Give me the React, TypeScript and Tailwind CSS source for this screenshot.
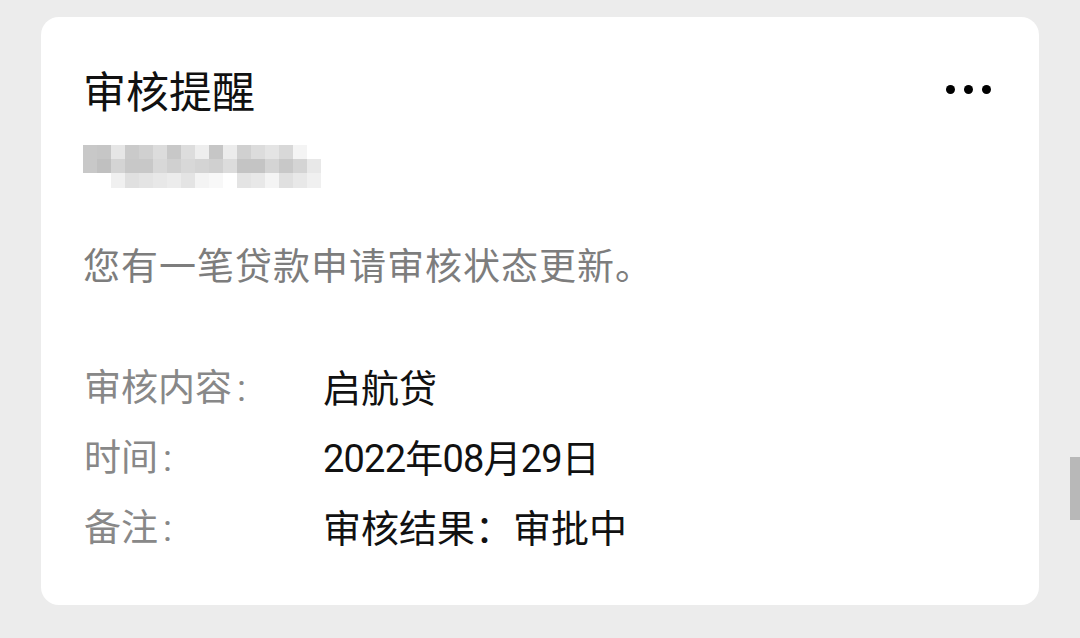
import React from "react";

const mosaic: string[][] = [
  ["#c8c8c8", "#c6c6c6", "#e6e6e6", "#cacaca", "#d0d0d0", "#dcdcdc", "#c8c8c8", "#dddddd", "#eeeeee", "#c6c6c6", "#ececec", "#d0d0d0", "#dcdcdc", "#e4e4e4", "#d8d8d8", "#f4f4f4", "#ffffff"],
  ["#c8c8c8", "#c0c0c0", "#d4d4d4", "#c8c8c8", "#c8c8c8", "#d8d8d8", "#d0d0d0", "#d8d8d8", "#d4d4d4", "#d0d0d0", "#dcdcdc", "#c4c4c4", "#c4c4c4", "#d4d4d4", "#c8c8c8", "#d4d4d4", "#e8e8e8"],
  ["#ffffff", "#ffffff", "#f0f0f0", "#e0e0e0", "#e4e4e4", "#e8e8e8", "#ececec", "#e4e4e4", "#f4f4f4", "#f8f8f8", "#ffffff", "#e4e4e4", "#e8e8e8", "#f4f4f4", "#e0e0e0", "#e8e8e8", "#f0f0f0"],
];

const rows: { label: string; value: string; tight?: boolean }[] = [
  { label: "审核内容", value: "启航贷" },
  { label: "时间", value: "2022年08月29日", tight: true },
  { label: "备注", value: "审核结果：审批中" },
];

export default function App() {
  return (
    <div
      className="relative w-[1080px] h-[638px] bg-[#ececec] pt-[17px] pl-[41px] overflow-hidden"
      style={{ fontFamily: "Roboto, 'Noto Sans CJK SC', sans-serif" }}
    >
      <div className="w-[998px] h-[588px] bg-white rounded-[18px] pt-[51px] pl-[44px] pr-[48px] flex flex-col">
        <div className="flex items-center justify-between">
          <div
            className="text-[43px] leading-[43px] text-[#111] ml-[-2px]"
            style={{ fontFamily: "'Noto Sans CJK SC', sans-serif" }}
          >
            审核提醒
          </div>
          <div className="flex items-center gap-[9px]">
            <span className="w-[9px] h-[9px] rounded-full bg-black" />
            <span className="w-[9px] h-[9px] rounded-full bg-black" />
            <span className="w-[9px] h-[9px] rounded-full bg-black" />
          </div>
        </div>

        <div className="mt-[34px] ml-[-2px] flex flex-col w-[238px]">
          {mosaic.map((row, ri) => (
            <div key={ri} className={ri === 2 ? "flex h-[15px]" : "flex h-[14px]"}>
              {row.map((c, ci) => (
                <div key={ci} className="w-[14px] h-full" style={{ backgroundColor: c }} />
              ))}
            </div>
          ))}
        </div>

        <div className="mt-[61px] ml-[-2px] text-[37px] leading-[37px] tracking-[1px] text-[#7d7d7d]">
          您有一笔贷款申请审核状态更新。
        </div>

        <div className="mt-[68px] flex flex-col">
          {rows.map((r) => (
            <div key={r.label} className="flex items-center h-[70px]">
              <div className="w-[238px] text-[37px] leading-[70px] text-[#888888] ml-[-1px]">
                {r.label}
                <span className="ml-[5px]">:</span>
              </div>
              <div
                className={
                  r.tight
                    ? "text-[38px] leading-[70px] text-[#111] tracking-[-0.8px] ml-[1px]"
                    : "text-[38px] leading-[70px] text-[#111] ml-[1px]"
                }
              >
                {r.value}
              </div>
            </div>
          ))}
        </div>
      </div>

      <div className="absolute left-[1070px] top-[457px] w-[10px] h-[63px] bg-[#b8b8b8]" />
    </div>
  );
}
